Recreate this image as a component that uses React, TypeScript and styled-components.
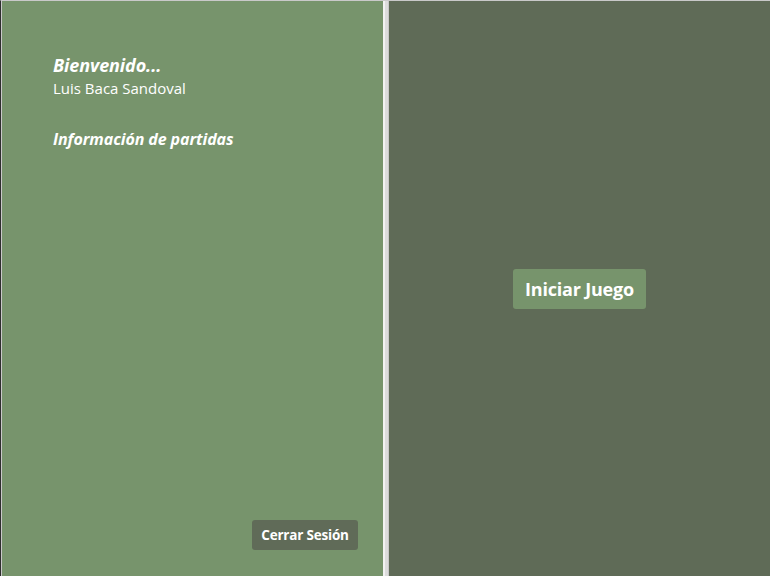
import React from "react";
import styled, { createGlobalStyle } from "styled-components";

const Global = createGlobalStyle`
  html, body { margin: 0; padding: 0; background: #2e2e2e; }
  * { box-sizing: border-box; }
`;

const Frame = styled.div`
  display: flex;
  width: 770px;
  height: 576px;
  border-top: 1px solid #c9c9c9;
  border-left: 1px solid #2e2e2e;
  background: #c9c9c9;
  padding-left: 1px;
  font-family: "Open Sans", "Noto Sans", sans-serif;
  color: #ffffff;
`;

const Sidebar = styled.aside`
  width: 381px;
  background: #77946c;
  display: flex;
  flex-direction: column;
  padding: 52px 25px 26px 51px;
`;

const Divider = styled.div`
  width: 6px;
  background: linear-gradient(90deg, #f2f2f2 0 2px, #dcdcdc 2px 5px, #c8c8c8 5px);
`;

const Main = styled.main`
  flex: 1;
  background: #5f6b57;
  display: flex;
  align-items: center;
  justify-content: center;
`;

const Welcome = styled.h1`
  margin: 0;
  font-size: 18px;
  font-weight: 700;
  font-style: italic;
  line-height: 25px;
  letter-spacing: -0.1px;
`;

const UserName = styled.p`
  margin: 0;
  font-size: 15px;
  font-weight: 400;
  line-height: 21px;
`;

const SectionTitle = styled.h2`
  margin: 29px 0 0;
  font-size: 16px;
  font-weight: 700;
  font-style: italic;
  line-height: 22px;
  letter-spacing: -0.1px;
`;

const Spacer = styled.div`
  flex: 1;
`;

const Footer = styled.div`
  display: flex;
  justify-content: flex-end;
`;

const Button = styled.button<{ $variant: "dark" | "light"; $size: "sm" | "lg" }>`
  border: none;
  border-radius: 3px;
  color: #ffffff;
  font-family: "Open Sans", "Noto Sans", sans-serif;
  font-weight: 700;
  cursor: pointer;
  background: ${(p) => (p.$variant === "dark" ? "#606b58" : "#77946c")};
  font-size: ${(p) => (p.$size === "sm" ? "13.5px" : "18px")};
  height: ${(p) => (p.$size === "sm" ? "30px" : "40px")};
  width: ${(p) => (p.$size === "sm" ? "106px" : "133px")};
  padding: 0;
  letter-spacing: -0.2px;
`;

export default function App() {
  return (
    <>
      <Global />
      <Frame>
        <Sidebar>
          <Welcome>Bienvenido...</Welcome>
          <UserName>Luis Baca Sandoval</UserName>
          <SectionTitle>Información de partidas</SectionTitle>
          <Spacer />
          <Footer>
            <Button $variant="dark" $size="sm">Cerrar Sesión</Button>
          </Footer>
        </Sidebar>
        <Divider />
        <Main>
          <Button $variant="light" $size="lg">Iniciar Juego</Button>
        </Main>
      </Frame>
    </>
  );
}
